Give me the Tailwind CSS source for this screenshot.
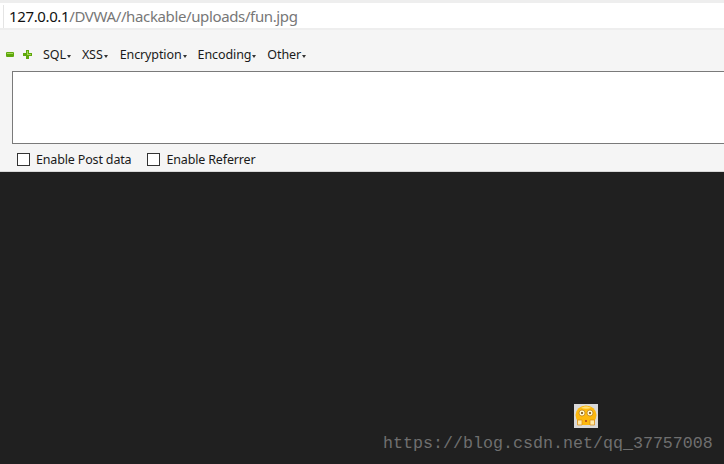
<!DOCTYPE html>
<html lang="en">
<head>
  <meta charset="UTF-8" />
  <title>fun.jpg</title>
  <script src="https://cdn.jsdelivr.net/npm/@tailwindcss/browser@4"></script>
</head>
<body class="w-[724px] h-[464px] overflow-hidden bg-[#202020] font-['Noto_Sans','Liberation_Sans',sans-serif]">

  <!-- url bar -->
  <div class="h-[30px] bg-white border-t-[3px] border-b-2 border-[#eeeeee] pl-[3px] pt-[2px]">
    <div class="h-[23px] border-l border-[#e4e4e4] pl-[5px] text-[15px] leading-[23px] text-[#777] tracking-[-0.37px] whitespace-nowrap"><span class="text-[#111]">127.0.0.1</span>/DVWA//hackable/uploads/fun.jpg</div>
  </div>

  <!-- hackbar -->
  <div class="h-[142px] bg-[#f5f5f5] border-b border-[#d8d8d8]">
    <div class="h-[41px] flex items-end pb-[7px] pl-[6px] text-[12.5px] leading-[18px] text-[#1a1a1a] tracking-[-0.1px] whitespace-nowrap">
      <svg width="8" height="5" viewBox="0 0 8 5" class="mb-[7px]"><rect width="8" height="5" rx="1" fill="#5fa80c"/><rect x="1" y="1" width="6" height="1" fill="#a6d85a"/></svg>
      <svg width="9" height="9" viewBox="0 0 9 9" class="ml-[9px] mb-[5px]"><path d="M3 0h3v3h3v3H6v3H3V6H0V3h3z" fill="#5fa80c"/><path d="M4 1h1v3h3v1H4z" fill="#a6d85a"/></svg>
      <div class="ml-[11px] flex items-center">SQL<span class="ml-[1px] mt-[2px] border-x-[2px] border-t-[3px] border-x-transparent border-t-[#333]"></span></div>
      <div class="ml-[11px] flex items-center">XSS<span class="ml-[1px] mt-[2px] border-x-[2px] border-t-[3px] border-x-transparent border-t-[#333]"></span></div>
      <div class="ml-[12px] flex items-center">Encryption<span class="ml-[1px] mt-[2px] border-x-[2px] border-t-[3px] border-x-transparent border-t-[#333]"></span></div>
      <div class="ml-[11px] flex items-center">Encoding<span class="ml-[1px] mt-[2px] border-x-[2px] border-t-[3px] border-x-transparent border-t-[#333]"></span></div>
      <div class="ml-[11px] flex items-center">Other<span class="ml-[1px] mt-[2px] border-x-[2px] border-t-[3px] border-x-transparent border-t-[#333]"></span></div>
    </div>
    <div class="ml-[12px] h-[73px] bg-white border-l border-t border-b border-[#7a7a7a]"></div>
    <div class="flex items-center pl-[17px] pt-[6px] text-[12.5px] leading-[19px] text-[#1a1a1a] tracking-[-0.16px] whitespace-nowrap">
      <span class="w-[13px] h-[13px] border border-[#333] bg-white"></span>
      <span class="ml-[6px]">Enable Post data</span>
      <span class="ml-[16px] w-[13px] h-[13px] border border-[#333] bg-white"></span>
      <span class="ml-[6px]">Enable Referrer</span>
    </div>
  </div>

  <!-- broken image over the dark page -->
  <div class="relative h-[292px] pl-[574px] pt-[232px]">
    <div class="w-[24px] h-[24px] bg-[#d9d9d9]">
      <svg width="24" height="24" viewBox="0 0 24 24">
        <ellipse cx="12" cy="11" rx="10.5" ry="9.5" fill="#fcb80e"/>
        <path d="M3 12h18v6l-2 3H5l-2-3z" fill="#fcb80e"/>
        <path d="M7 4 C10 2 14 2 17 4 C14 5 10 5 7 4Z" fill="#ffe27a"/>
        <circle cx="8" cy="9" r="3" fill="#fff6cc" stroke="#b87a18" stroke-width="0.7"/>
        <circle cx="16" cy="9" r="3" fill="#fff6cc" stroke="#b87a18" stroke-width="0.7"/>
        <circle cx="8" cy="9" r="1" fill="#6a3c00"/>
        <circle cx="16" cy="9" r="1" fill="#6a3c00"/>
        <rect x="11" y="16" width="2" height="2" fill="#c06018"/>
        <path d="M3.5 16h4.5v5H3.500zM16 16h4.500v5H16z" fill="#ffe9a8" stroke="#d98a10" stroke-width="0.7"/>
      </svg>
    </div>
    <div class="absolute left-[383px] top-[260px] text-[16.67px] leading-[24px] text-[#6f6f6f] font-['Liberation_Mono',monospace] whitespace-nowrap">https://blog.csdn.net/qq_37757008</div>
  </div>
</body>
</html>
